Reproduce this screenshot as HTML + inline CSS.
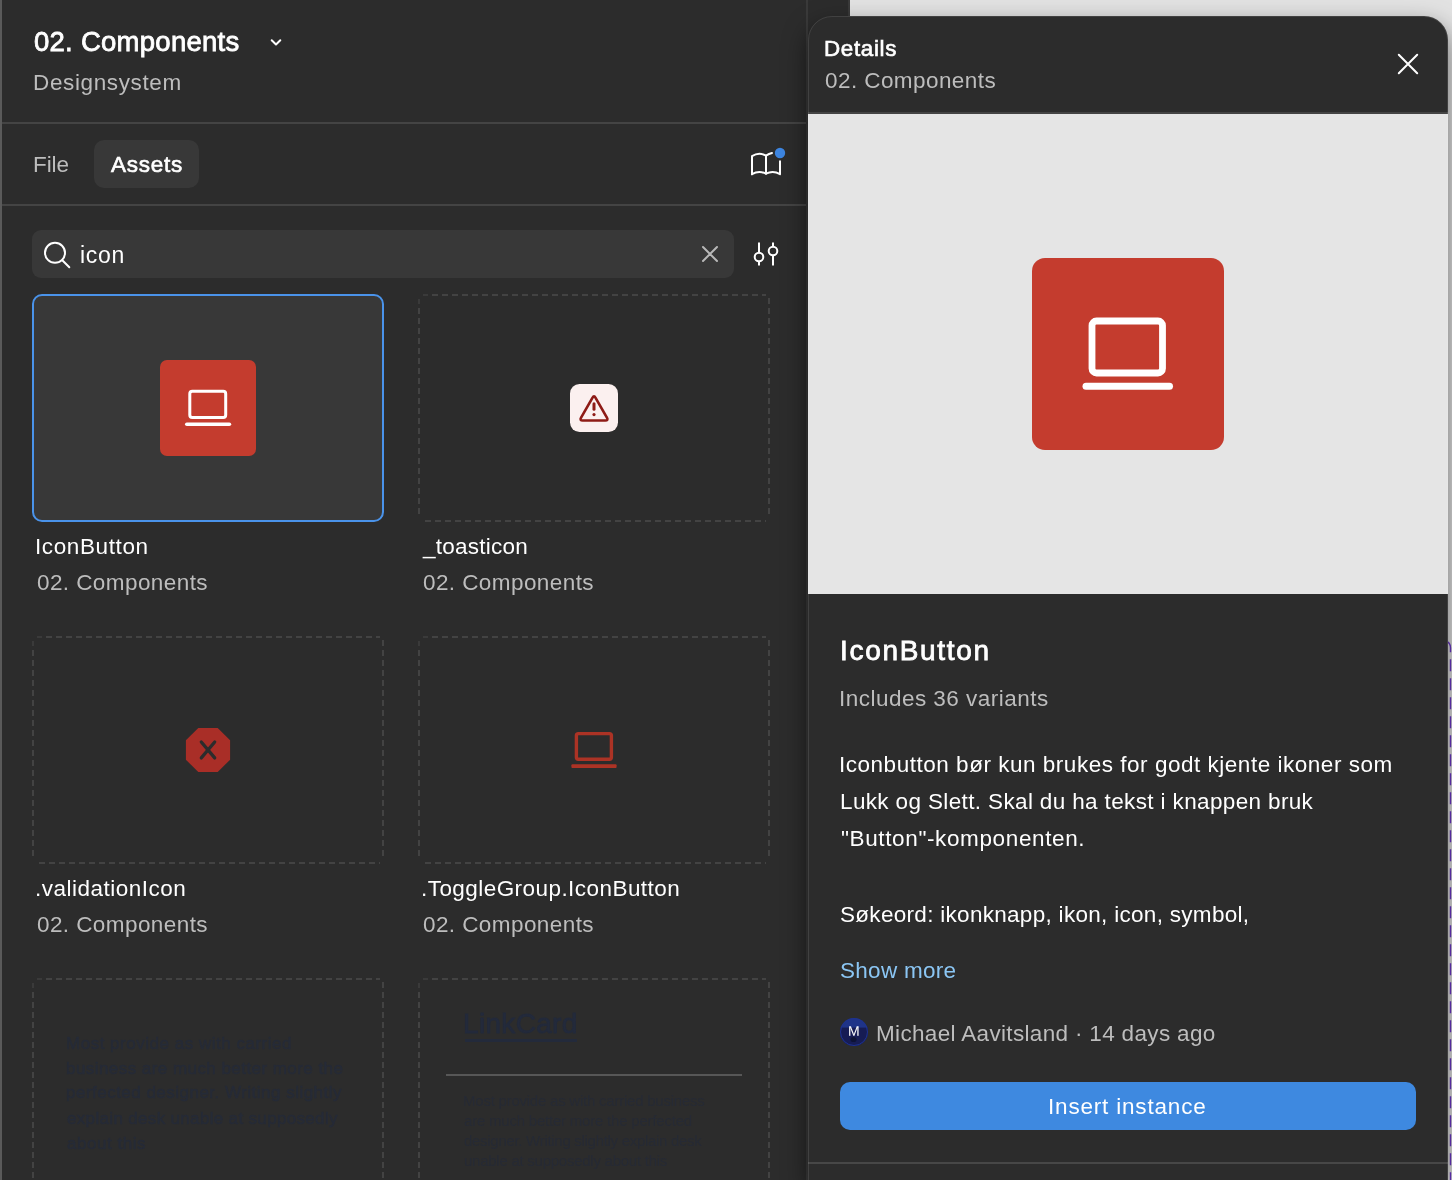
<!DOCTYPE html>
<html><head><meta charset="utf-8">
<style>
*{margin:0;padding:0;box-sizing:border-box}
html,body{width:1452px;height:1180px;overflow:hidden;background:#2c2c2c;font-family:"Liberation Sans",sans-serif;position:relative}
.abs{position:absolute}
.t{position:absolute;white-space:nowrap;line-height:1;will-change:transform}
svg{position:absolute;overflow:visible}
</style></head><body>
<!-- LEFT PANEL -->
<div class="abs" style="left:0;top:0;width:2px;height:1180px;background:#5a5a5a"></div>
<div class="t" style="left:34.40px;top:27.72px;font-size:27.5px;letter-spacing:0.266px;color:#ffffff;font-weight:normal;-webkit-text-stroke:0.80px #ffffff;">02. Components</div>
<svg style="left:0;top:0" width="1452" height="1180">
  <path d="M271.7 40.2 L276 44.5 L280.3 40.2" fill="none" stroke="#fff" stroke-width="2" stroke-linecap="round" stroke-linejoin="round"/>
</svg>
<div class="t" style="left:32.70px;top:71.95px;font-size:22.5px;letter-spacing:0.632px;color:#bdbdbd;font-weight:normal;">Designsystem</div>
<div class="abs" style="left:2px;top:122px;width:804px;height:2px;background:#444"></div>
<div class="t" style="left:32.60px;top:154.15px;font-size:22.5px;letter-spacing:-0.08px;color:#bdbdbd;font-weight:normal;">File</div>
<div class="abs" style="left:94px;top:140px;width:105px;height:48px;border-radius:10px;background:#383838"></div>
<div class="t" style="left:110.53px;top:154.15px;font-size:22.5px;letter-spacing:0.735px;color:#ffffff;font-weight:normal;-webkit-text-stroke:0.65px #ffffff;">Assets</div>
<svg style="left:0;top:0" width="1452" height="1180">
  <g fill="none" stroke="#fff" stroke-width="2" stroke-linejoin="round" stroke-linecap="round" transform="translate(0,-0.8)">
    <path d="M752 175 V157 Q759 152.5 766 156.5 V174.5"/>
    <path d="M752 175 Q759 171 766 174.5 Q773 171 780 175 V162"/>
    <path d="M766 156.5 Q769 154.5 772 153.8"/>
  </g>
  <circle cx="780" cy="153" r="5.2" fill="#3d85e0"/>
</svg>
<div class="abs" style="left:2px;top:204px;width:804px;height:2px;background:#444"></div>
<div class="abs" style="left:32px;top:230px;width:702px;height:48px;border-radius:9px;background:#383838"></div>
<svg style="left:0;top:0" width="1452" height="1180">
  <circle cx="55" cy="252.8" r="10" fill="none" stroke="#fff" stroke-width="2"/>
  <path d="M62.3 260.2 L69.3 267.2" stroke="#fff" stroke-width="2" stroke-linecap="round"/>
  <path d="M703 247 L717 261 M717 247 L703 261" stroke="#b8b8b8" stroke-width="2" stroke-linecap="round"/>
  <g stroke="#fff" stroke-width="2" fill="#2c2c2c">
    <path d="M759 242.5 V265.5 M773 242.5 V265.5"/>
    <circle cx="759" cy="257" r="4.3"/>
    <circle cx="773" cy="251" r="4.3"/>
  </g>
</svg>
<div class="t" style="left:79.70px;top:243.53px;font-size:23px;letter-spacing:0.7px;color:#ffffff;font-weight:normal;">icon</div>

<!-- cards -->
<div class="abs" style="left:32px;top:294px;width:352px;height:228px;border-radius:10px;background:#383838;border:2px solid #4a93ea"></div>
<svg style="left:0;top:0" width="1452" height="1180">
  <g fill="none" stroke="#434343" stroke-width="2" stroke-dasharray="6 4">
    <path d="M432 295 H766 M769 298 V518 M419 308 V518 M425 521 H766 M46 637 H380 M383 640 V860 M33 650 V860 M39 863 H380 M432 637 H766 M769 640 V860 M419 650 V860 M425 863 H766 M46 979 H380 M383 982 V1374 M33 992 V1374 M432 979 H766 M769 982 V1374 M419 992 V1374"/>
  </g>
  <path fill="none" stroke="#3a3a3a" stroke-width="2" d="M423 295 H428 M419 299 V304 M37 637 H42 M33 641 V646 M423 637 H428 M419 641 V646 M37 979 H42 M33 983 V988 M423 979 H428 M419 983 V988"/>
  <!-- card1 icon -->
  <rect x="160" y="360" width="96" height="96" rx="7" fill="#c43c2e"/>
  <rect x="189.8" y="391.3" width="35.9" height="26.3" rx="2.5" fill="none" stroke="#fff" stroke-width="3"/>
  <path d="M186.8 424.2 H229.4" stroke="#fff" stroke-width="3.6" stroke-linecap="round"/>
  <!-- card2 toast icon -->
  <rect x="570" y="384" width="48" height="48" rx="9.5" fill="#fbf0ef"/>
  <path d="M592.42 397.78 Q594 395 595.58 397.78 L606.92 417.72 Q608.5 420.5 605.3 420.5 L582.7 420.5 Q579.5 420.5 581.08 417.72 Z" fill="none" stroke="#8e1b16" stroke-width="2.6" stroke-linejoin="round"/>
  <path d="M594 403.8 V409.3" stroke="#8e1b16" stroke-width="3" stroke-linecap="round"/>
  <circle cx="594" cy="414.6" r="1.6" fill="#8e1b16"/>
  <!-- card3 octagon -->
  <path d="M198.3 727.9 H217.7 L230.1 740.3 V759.7 L217.7 772.1 H198.3 L185.9 759.7 V740.3 Z" fill="#a92e27"/>
  <path d="M201.3 742 L214.7 757.9 M214.7 742 L201.3 757.9" stroke="#2c2c2c" stroke-width="3.3" stroke-linecap="round"/>
  <!-- card4 outline laptop -->
  <rect x="576.4" y="733.6" width="35" height="25.6" rx="2" fill="none" stroke="#ac3325" stroke-width="3.4"/>
  <rect x="571.4" y="764.2" width="45.2" height="3.8" rx="1" fill="#ac3325"/>
</svg>
<div class="t" style="left:35.40px;top:535.75px;font-size:22.5px;letter-spacing:0.615px;color:#ffffff;font-weight:normal;">IconButton</div>
<div class="t" style="left:36.70px;top:571.65px;font-size:22.5px;letter-spacing:0.419px;color:#bdbdbd;font-weight:normal;">02. Components</div>
<div class="t" style="left:423.10px;top:535.75px;font-size:22.5px;letter-spacing:0.249px;color:#ffffff;font-weight:normal;">_toasticon</div>
<div class="t" style="left:35.20px;top:877.75px;font-size:22.5px;letter-spacing:0.491px;color:#ffffff;font-weight:normal;">.validationIcon</div>
<div class="t" style="left:421.10px;top:877.75px;font-size:22.5px;letter-spacing:0.445px;color:#ffffff;font-weight:normal;">.ToggleGroup.IconButton</div>
<div class="t" style="left:422.70px;top:571.65px;font-size:22.5px;letter-spacing:0.419px;color:#bdbdbd;font-weight:normal;">02. Components</div>
<div class="t" style="left:36.70px;top:913.65px;font-size:22.5px;letter-spacing:0.419px;color:#bdbdbd;font-weight:normal;">02. Components</div>
<div class="t" style="left:422.70px;top:913.65px;font-size:22.5px;letter-spacing:0.419px;color:#bdbdbd;font-weight:normal;">02. Components</div>
<div class="t" style="left:65.75px;top:1035.21px;font-size:17px;letter-spacing:0.512px;color:#262b37;font-weight:normal;-webkit-text-stroke:0.49px #262b37;">Most provide as with carried</div>
<div class="t" style="left:65.75px;top:1059.61px;font-size:17px;letter-spacing:0.446px;color:#262b37;font-weight:normal;-webkit-text-stroke:0.49px #262b37;">business are much better more the</div>
<div class="t" style="left:65.75px;top:1084.01px;font-size:17px;letter-spacing:0.483px;color:#262b37;font-weight:normal;-webkit-text-stroke:0.49px #262b37;">perfected designer. Writing slightly</div>
<div class="t" style="left:66.75px;top:1109.61px;font-size:17px;letter-spacing:0.331px;color:#262b37;font-weight:normal;-webkit-text-stroke:0.49px #262b37;">explain desk unable at supposedly</div>
<div class="t" style="left:66.75px;top:1134.61px;font-size:17px;letter-spacing:0.532px;color:#262b37;font-weight:normal;-webkit-text-stroke:0.49px #262b37;">about this</div>
<div class="t" style="left:463.41px;top:1010.29px;font-size:28px;letter-spacing:0.315px;color:#232a3b;font-weight:normal;-webkit-text-stroke:0.81px #232a3b;">LinkCard</div>
<div class="abs" style="left:465px;top:1039px;width:112px;height:3px;background:#232a3b"></div>
<div class="abs" style="left:446px;top:1074px;width:296px;height:2px;background:#575757"></div>
<div class="t" style="left:462.70px;top:1093.10px;font-size:15px;letter-spacing:-0.231px;color:#262a34;font-weight:normal;">Most provide as with carried business</div>
<div class="t" style="left:463.70px;top:1113.30px;font-size:15px;letter-spacing:-0.212px;color:#262a34;font-weight:normal;">are much better more the perfected</div>
<div class="t" style="left:463.70px;top:1133.30px;font-size:15px;letter-spacing:-0.295px;color:#262a34;font-weight:normal;">designer. Writing slightly explain desk</div>
<div class="t" style="left:463.70px;top:1153.00px;font-size:15px;letter-spacing:-0.256px;color:#262a34;font-weight:normal;">unable at supposedly about this</div>
<!-- separators & canvas -->
<div class="abs" style="left:806px;top:0;width:2px;height:1180px;background:#3a3a3a"></div>
<div class="abs" style="left:848px;top:0;width:2px;height:16px;background:#3a3a3a"></div>
<div class="abs" style="left:850px;top:0;width:602px;height:1180px;background:#e2e2e2"></div>
<svg style="left:0;top:0" width="1452" height="1180">
  <path d="M1445 641 Q1450.5 642 1450.5 648 V1180" fill="none" stroke="#6e38cc" stroke-width="1.4" stroke-dasharray="12 7" stroke-dashoffset="-2"/>
</svg>
<!-- DETAILS PANEL -->
<div id="panel" class="abs" style="left:808px;top:16px;width:640px;height:1164px;background:#2c2c2c;border-radius:24px 24px 0 0;box-shadow:0 10px 24px rgba(0,0,0,.55);overflow:hidden">
  <div class="abs" style="left:0;top:96px;width:640px;height:2px;background:#444"></div>
  <div class="abs" style="left:0;top:98px;width:640px;height:480px;background:#e5e5e5"></div>
  <div class="abs" style="left:0;top:1146px;width:640px;height:2px;background:#474747"></div>
</div>
<div class="abs" style="left:808px;top:16px;width:640px;height:1180px;border-radius:24px 24px 0 0;border:1px solid rgba(255,255,255,.1)"></div>
<div class="t" style="left:824.22px;top:38.13px;font-size:22.4px;letter-spacing:0.668px;color:#ffffff;font-weight:normal;-webkit-text-stroke:0.65px #ffffff;">Details</div>
<div class="t" style="left:824.90px;top:70.15px;font-size:22.5px;letter-spacing:0.427px;color:#bdbdbd;font-weight:normal;">02. Components</div>
<svg style="left:0;top:0" width="1452" height="1180">
  <path d="M1398.8 54.8 L1417.2 73.2 M1417.2 54.8 L1398.8 73.2" stroke="#fff" stroke-width="2" stroke-linecap="round"/>
  <rect x="1032" y="258" width="192" height="192" rx="13" fill="#c43c2e"/>
  <rect x="1092" y="321" width="70.5" height="52" rx="4.5" fill="none" stroke="#fff" stroke-width="6.8"/>
  <path d="M1086 386.3 H1169.5" stroke="#fff" stroke-width="7" stroke-linecap="round"/>
</svg>
<div class="t" style="left:839.81px;top:637.19px;font-size:28px;letter-spacing:1.676px;color:#ffffff;font-weight:normal;-webkit-text-stroke:0.81px #ffffff;">IconButton</div>
<div class="t" style="left:839.40px;top:687.95px;font-size:22.5px;letter-spacing:0.475px;color:#bdbdbd;font-weight:normal;">Includes 36 variants</div>
<div class="t" style="left:839.40px;top:753.95px;font-size:22.5px;letter-spacing:0.524px;color:#ffffff;font-weight:normal;">Iconbutton bør kun brukes for godt kjente ikoner som</div>
<div class="t" style="left:840.40px;top:790.75px;font-size:22.5px;letter-spacing:0.363px;color:#ffffff;font-weight:normal;">Lukk og Slett. Skal du ha tekst i knappen bruk</div>
<div class="t" style="left:841.40px;top:828.35px;font-size:22.5px;letter-spacing:0.622px;color:#ffffff;font-weight:normal;">"Button"-komponenten.</div>
<div class="t" style="left:840.30px;top:903.65px;font-size:22.5px;letter-spacing:0.299px;color:#ffffff;font-weight:normal;">Søkeord: ikonknapp, ikon, icon, symbol,</div>
<div class="t" style="left:840.30px;top:960.15px;font-size:22.5px;letter-spacing:0.29px;color:#8bc6f4;font-weight:normal;">Show more</div>
<svg style="left:0;top:0" width="1452" height="1180">
  <defs><clipPath id="avc"><circle cx="854" cy="1032" r="14"/></clipPath></defs>
  <circle cx="854" cy="1032" r="14" fill="#1f3488"/>
  <rect x="838" y="1027.6" width="32" height="20" fill="#161c54" clip-path="url(#avc)"/>
  <circle cx="854" cy="1032" r="13.5" fill="none" stroke="#1e3290" stroke-width="1"/>
  <ellipse cx="853.5" cy="1039.5" rx="3" ry="2.6" fill="#0e1336"/>
</svg>
<div class="t" style="left:848px;top:1023.8px;font-size:14px;color:#fff;transform:scaleY(0.95)">M</div>
<div class="t" style="left:876.40px;top:1022.95px;font-size:22.5px;letter-spacing:0.333px;color:#bdbdbd;font-weight:normal;">Michael Aavitsland · 14 days ago</div>
<div class="abs" style="left:840px;top:1082px;width:576px;height:48px;border-radius:10px;background:#3e89e0"></div>
<div class="t" style="left:1048.40px;top:1095.65px;font-size:22.5px;letter-spacing:0.813px;color:#ffffff;font-weight:normal;">Insert instance</div>

</body></html>
